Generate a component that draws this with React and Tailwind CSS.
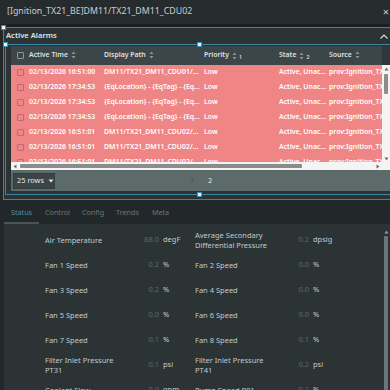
import React from "react";

const FONT = { fontFamily: '"Noto Sans", "Open Sans", sans-serif' };

const rows = [
  ["02/13/2026 16:51:00", "DM11/TX21_DM11_CDU01/Status/Alarm"],
  ["02/13/2026 17:34:53", "{EqLocation} - {EqTag} - {EqDescription}"],
  ["02/13/2026 17:34:53", "{EqLocation} - {EqTag} - {EqDescription}"],
  ["02/13/2026 17:34:53", "{EqLocation} - {EqTag} - {EqDescription}"],
  ["02/13/2026 16:51:01", "DM11/TX21_DM11_CDU02/Status/Alarm"],
  ["02/13/2026 16:51:01", "DM11/TX21_DM11_CDU02/Status/Alarm"],
  ["02/13/2026 16:51:01", "DM11/TX21_DM11_CDU02/Status/Alarm"],
];

const data = [
  [["Air Temperature", "88.0", "degF"], ["Average Secondary Differential Pressure", "0.2", "dpsig"]],
  [["Fan 1 Speed", "0.2", "%"], ["Fan 2 Speed", "0.0", "%"]],
  [["Fan 3 Speed", "0.2", "%"], ["Fan 4 Speed", "0.0", "%"]],
  [["Fan 5 Speed", "0.0", "%"], ["Fan 6 Speed", "0.0", "%"]],
  [["Fan 7 Speed", "0.1", "%"], ["Fan 8 Speed", "0.1", "%"]],
  [["Filter Inlet Pressure PT31", "0.1", "psi"], ["Filter Inlet Pressure PT41", "0.2", "psi"]],
  [["Coolant Flow", "0.0", "gpm"], ["Pump Speed P01", "0.1", "%"]],
];

function Sort() {
  return (
    <svg width="5" height="8" viewBox="0 0 5 8" className="ml-[3px] shrink-0">
      <path d="M2.5 0.5 L4.5 3 L0.5 3 Z" fill="#8d9698" />
      <path d="M2.5 7.5 L4.5 5 L0.5 5 Z" fill="#8d9698" />
    </svg>
  );
}

function Handle({ className }) {
  return (
    <div className={"absolute w-[5px] h-[5px] bg-[#3a8fb5] flex items-center justify-center " + className}>
      <div className="w-[3px] h-[3px] bg-[#e8f4fa]" />
    </div>
  );
}

function Cell({ item }) {
  const [label, value, unit] = item;
  return (
    <div className="w-[150px] flex items-center">
      <div className="w-[80px] shrink-0 leading-[10px] text-[#c4c9ca]">{label}</div>
      <div className="w-[34px] shrink-0 text-right text-[#536b6e]">{value}</div>
      <div className="ml-[4px] text-[#c4c9ca]">{unit}</div>
    </div>
  );
}

export default function App() {
  return (
    <div style={FONT} className="w-[390px] h-[390px] overflow-hidden bg-[#22282a] flex flex-col">
      {/* title bar */}
      <div className="h-[24px] shrink-0 bg-[#262c2e] flex items-center justify-between pl-[7px] pr-[1px] text-[8.8px] text-[#c9cdce]">
        <span>[Ignition_TX21_BE]DM11/TX21_DM11_CDU02</span>
        <span className="text-[11px] text-[#c9cdce]">×</span>
      </div>
      <div className="h-[3px] shrink-0 bg-[#1b2022]" />

      {/* alarms component */}
      <div className="relative ml-[3px] h-[173px] shrink-0 border-l border-t border-b border-[#3a86a6] flex flex-col bg-[#2b3335]">
        <div className="h-[16px] shrink-0 flex items-center justify-between pl-[2px] pr-[2px] text-[7.6px] font-semibold text-[#dfe3e4]">
          <span>Active Alarms</span>
          <svg width="8" height="5" viewBox="0 0 8 5"><path d="M0.5 4.5 L4 1 L7.5 4.5" stroke="#d6dadb" strokeWidth="1.2" fill="none" /></svg>
        </div>
        <div className="relative ml-[1px] h-[151px] shrink-0 border-l border-t border-b border-[#3a86a6] pl-[5px] pt-[1px] flex flex-col">
          {/* header */}
          <div className="h-[19px] shrink-0 flex items-center bg-[#3c4547] text-[6.9px] font-semibold text-[#dde1e2] whitespace-nowrap">
            <div className="w-[18px] shrink-0 flex justify-center">
              <div className="w-[7px] h-[7px] border border-[#8d9698] rounded-[1px]" />
            </div>
            <div className="w-[75px] shrink-0 flex items-center">Active Time<Sort /></div>
            <div className="w-[100px] shrink-0 flex items-center">Display Path<Sort /></div>
            <div className="w-[75px] shrink-0 flex items-center">Priority<Sort /><span className="ml-[2px] text-[5px] self-start mt-[4px]">1</span></div>
            <div className="w-[50px] shrink-0 flex items-center">State<Sort /><span className="ml-[2px] text-[5px] self-start mt-[4px]">2</span></div>
            <div className="flex-1 flex items-center">Source<Sort /></div>
            <div className="w-[8px] h-full shrink-0 bg-[#2f3739]" />
          </div>
          {/* rows */}
          <div className="h-[97px] shrink-0 flex overflow-hidden">
            <div className="flex-1 bg-[#f08585] overflow-hidden">
              {rows.map((r, i) => (
                <div key={i} className="h-[15px] flex items-center text-[6.9px] font-semibold text-white whitespace-nowrap">
                  <div className="w-[18px] shrink-0 flex justify-center">
                    <div className="w-[7px] h-[7px] border border-[#b96c6c] rounded-[1px]" />
                  </div>
                  <div className="w-[75px] shrink-0">{r[0]}</div>
                  <div className="w-[100px] shrink-0 pr-[2px]"><div className="truncate">{r[1]}</div></div>
                  <div className="w-[75px] shrink-0">Low</div>
                  <div className="w-[50px] shrink-0"><div className="truncate">Active, Unacknowledged</div></div>
                  <div className="flex-1 overflow-hidden">prov:Ignition_TX21_BE:/tag</div>
                </div>
              ))}
            </div>
            <div className="w-[8px] shrink-0 bg-[#f4f4f4] flex flex-col items-center">
              <svg width="5" height="4" viewBox="0 0 5 4" className="mt-[2px]"><path d="M2.5 0.5 L4.5 3.5 L0.5 3.5 Z" fill="#6a6a6a" /></svg>
              <div className="w-[4px] h-[20px] mt-[3px] bg-[#8c8c8c] rounded-[1px]" />
              <div className="flex-1" />
              <svg width="5" height="4" viewBox="0 0 5 4" className="mb-[1px]"><path d="M2.5 3.5 L4.5 0.5 L0.5 0.5 Z" fill="#6a6a6a" /></svg>
            </div>
          </div>
          {/* h scrollbar */}
          <div className="h-[8px] shrink-0 bg-[#f4f4f4] flex items-center">
            <svg width="4" height="5" viewBox="0 0 4 5" className="ml-[2px]"><path d="M0.5 2.5 L3.5 0.5 L3.5 4.5 Z" fill="#6a6a6a" /></svg>
            <div className="ml-[3px] w-[282px] h-[4px] bg-[#8c8c8c] rounded-[1px]" />
            <div className="flex-1" />
            <svg width="4" height="5" viewBox="0 0 4 5" className="mr-[10px]"><path d="M3.5 2.5 L0.5 0.5 L0.5 4.5 Z" fill="#6a6a6a" /></svg>
          </div>
          {/* pagination */}
          <div className="h-[21px] shrink-0 bg-[#5d6a6a] flex items-center pl-[2px]">
            <div className="w-[42px] h-[16px] bg-[#3b4547] border border-[#333c3e] flex items-center pl-[3px] text-[7.4px] text-[#e3e6e6] whitespace-nowrap">
              <span>25 rows</span>
              <svg width="6" height="4" viewBox="0 0 6 4" className="ml-[4px]"><path d="M0.5 0.5 L5.5 0.5 L3 3.5 Z" fill="#e3e6e6" /></svg>
            </div>
            <div className="ml-[135px] w-[18px] text-[7.4px] text-[#465253]">1</div>
            <div className="text-[7.4px] text-[#e6e9e9]">2</div>
          </div>
          <Handle className="left-[-3px] top-[-3px]" />
          <Handle className="left-[191px] top-[-3px]" />
          <Handle className="left-[191px] bottom-[-3px]" />
        </div>
        <Handle className="left-[-3px] top-[-3px]" />
      </div>

      {/* tabs */}
      <div className="h-[23px] shrink-0 mt-[1px] flex items-end pl-[4px] text-[7.2px]">
        <div className="w-[35px] h-full flex items-center justify-center border-b-2 border-[#4b5557] text-[#4b8ea6] pt-[1px]">Status</div>
        <div className="h-full flex items-center ml-[6px] text-[#6b7577]">Control</div>
        <div className="h-full flex items-center ml-[12px] text-[#6b7577]">Config</div>
        <div className="h-full flex items-center ml-[12px] text-[#6b7577]">Trends</div>
        <div className="h-full flex items-center ml-[13px] text-[#6b7577]">Meta</div>
      </div>

      {/* status panel */}
      <div className="flex-1 ml-[4px] bg-[#2b3335] flex overflow-hidden">
        <div className="flex-1 pt-[3px] text-[7.5px]">
          {data.map((row, i) => (
            <div key={i} className="h-[25px] flex items-center pl-[41px]">
              <Cell item={row[0]} />
              <Cell item={row[1]} />
            </div>
          ))}
        </div>
        <div className="w-[8px] shrink-0 bg-[#2b3335] flex flex-col items-center pt-[6px]">
          <svg width="5" height="4" viewBox="0 0 5 4"><path d="M2.5 0.5 L4.5 3.5 L0.5 3.5 Z" fill="#9aa2a4" /></svg>
          <div className="w-[4px] flex-1 mt-[2px] bg-[#6c7577] rounded-[1px]" />
        </div>
      </div>
    </div>
  );
}
